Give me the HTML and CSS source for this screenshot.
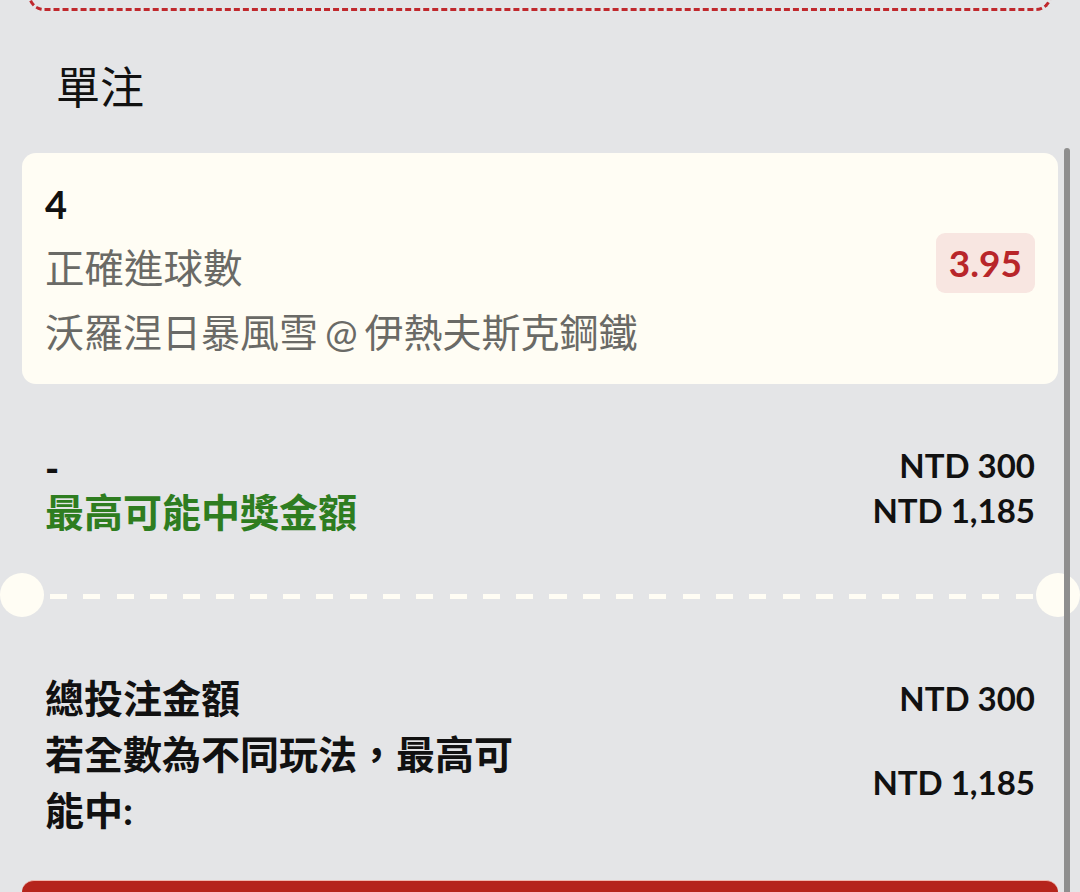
FILE: index.html
```html
<!DOCTYPE html>
<html lang="zh-Hant">
<head>
<meta charset="utf-8">
<link rel="stylesheet" href="styles.css">
</head>
<body>
<div class="page">
  <div class="prev-card"></div>
  <div class="title">單注</div>

  <div class="card">
    <div class="card-info">
      <div class="pick">4</div>
      <div class="market">正確進球數</div>
      <div class="match">沃羅涅日暴風雪 @ 伊熱夫斯克鋼鐵</div>
    </div>
    <div class="odds">3.95</div>
  </div>

  <div class="stake">
    <div class="stake-label">-</div>
    <div class="amount">NTD 300</div>
    <div class="win-label">最高可能中獎金額</div>
    <div class="amount">NTD 1,185</div>
  </div>

  <div class="sep"></div>

  <div class="summary">
    <div class="sum-row">
      <div class="sum-label">總投注金額</div>
      <div class="amount">NTD 300</div>
    </div>
    <div class="sum-row">
      <div class="sum-label">若全數為不同玩法，最高可能中:</div>
      <div class="amount">NTD 1,185</div>
    </div>
  </div>

  <div class="submit"></div>
</div>
<div class="scrollbar"></div>
</body>
</html>
```

FILE: styles.css
```css
html, body {
  margin: 0;
  padding: 0;
  height: 100%;
  overflow: hidden;
}

body {
  background: #e4e5e7;
  font-family: Lato, "Noto Sans CJK TC", sans-serif;
  color: #111;
  position: relative;
}

.page {
  padding: 1px 22px 0;
}

.prev-card {
  height: 32px;
  margin: -22px 6px 0 6px;
  border: 3px dashed #c0282d;
  border-top: none;
  border-radius: 0 0 16px 16px;
  box-sizing: border-box;
}

.title {
  font-size: 44px;
  line-height: 58px;
  padding: 47px 0 0 34px;
  margin-bottom: 37px;
  font-weight: 400;
  color: #111;
}

.card {
  background: #fffdf4;
  border-radius: 14px;
  padding: 19px 23px 20px;
  display: flex;
  justify-content: space-between;
  align-items: center;
}

.card-info {
  line-height: 64px;
}

.pick {
  font-size: 38px;
  font-weight: 700;
  color: #111;
}

.market {
  font-size: 39.5px;
  color: #6a6a66;
  font-weight: 400;
}

.match {
  font-size: 39px;
  color: #6a6a66;
  font-weight: 400;
  word-spacing: -3px;
}

.odds {
  background: #f8e6e1;
  color: #b8262a;
  font-weight: 700;
  font-size: 37px;
  line-height: 60px;
  padding: 0 13px;
  border-radius: 9px;
  margin-bottom: 10px;
}

.stake {
  margin-top: 61px;
  padding: 0 23px;
  display: grid;
  grid-template-columns: 1fr auto;
  line-height: 45px;
  align-items: center;
}

.stake-label {
  font-size: 38px;
  font-weight: 900;
}

.win-label {
  font-size: 39px;
  font-weight: 700;
  color: #2e7d20;
}

.amount {
  font-size: 33px;
  font-weight: 700;
  color: #111;
  text-align: right;
  margin-top: -5px;
}

.sep {
  position: relative;
  height: 44px;
  margin: 39px 0 0;
  background-image: repeating-linear-gradient(to right, #fffdf4 0 17px, transparent 17px 33.3px);
  background-repeat: no-repeat;
  background-size: 984px 5px;
  background-position: 28px 20px;
}

.sep::before,
.sep::after {
  content: "";
  position: absolute;
  top: -1px;
  width: 44px;
  height: 44px;
  border-radius: 50%;
  background: #fffdf4;
}

.sep::before {
  left: -22px;
}

.sep::after {
  right: -22px;
}

.summary {
  margin-top: 52px;
  padding: 0 23px;
}

.sum-row {
  display: flex;
  justify-content: space-between;
  align-items: center;
}

.sum-row .amount {
  margin-top: 0;
}

.sum-label {
  width: 480px;
  font-size: 39px;
  font-weight: 700;
  line-height: 56px;
}

.submit {
  margin-top: 42px;
  height: 120px;
  background: #b5241c;
  border-radius: 12px;
  border-top: 1px solid #f0b8ae;
  box-sizing: border-box;
}

.scrollbar {
  position: absolute;
  top: 148px;
  bottom: 0;
  right: 10px;
  width: 6px;
  border-radius: 3px 3px 0 0;
  background: #8e8e8e;
}
```
